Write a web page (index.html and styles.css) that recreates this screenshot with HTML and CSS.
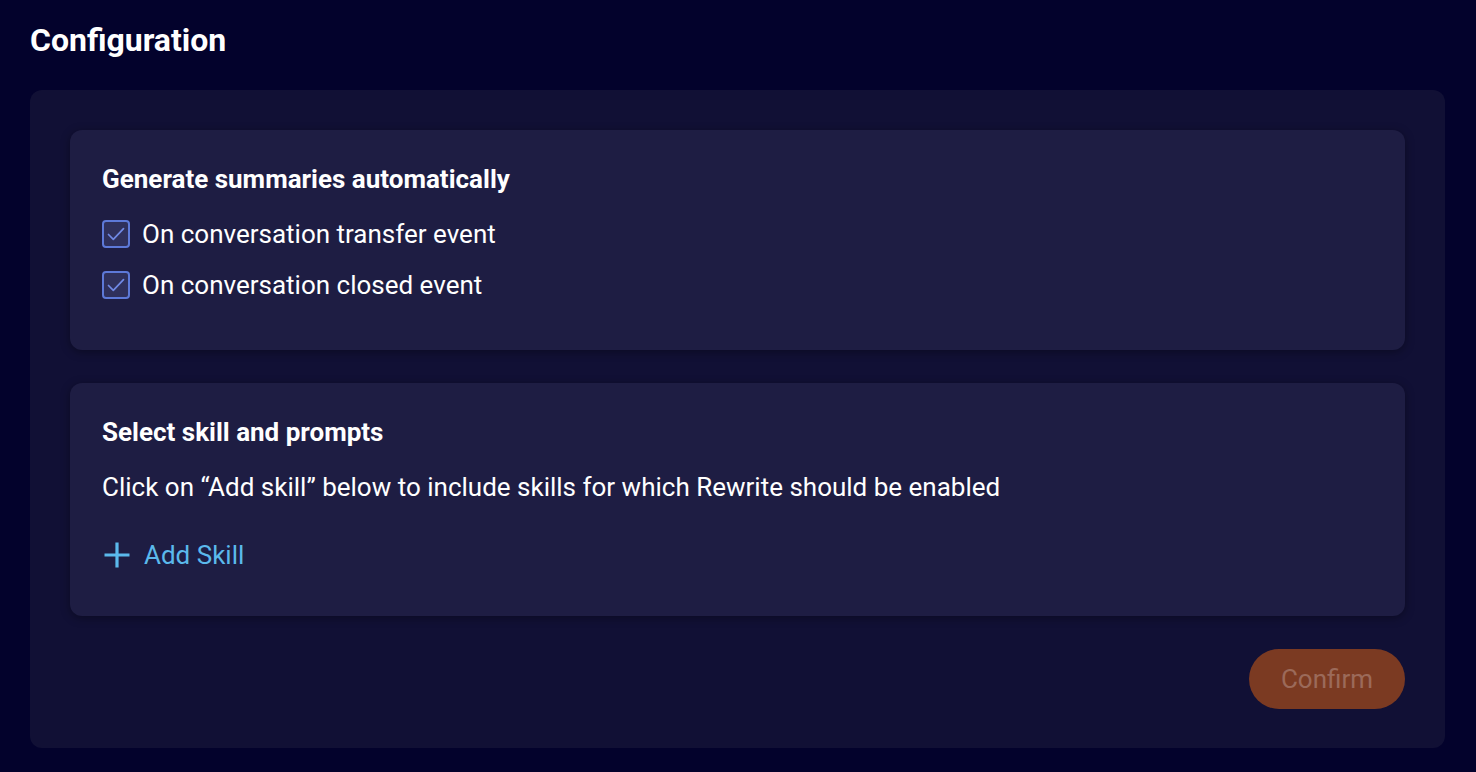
FILE: index.html
```html
<!DOCTYPE html>
<html>
<head>
<meta charset="utf-8">
<link rel="stylesheet" href="styles.css">
</head>
<body>
<div class="page">
  <h1 class="title">Configuration</h1>
  <div class="panel">
    <section class="card card-summaries">
      <h2 class="card-title">Generate summaries automatically</h2>
      <div class="options">
        <label class="option">
          <span class="checkbox">
            <svg viewBox="0 0 20 20" width="20" height="20"><path d="M2.5 10.5l4.8 4.8L17.5 4.6" fill="none" stroke="#7089e4" stroke-width="1.7" stroke-linecap="round" stroke-linejoin="round"/></svg>
          </span>
          <span class="option-text">On conversation transfer event</span>
        </label>
        <label class="option">
          <span class="checkbox">
            <svg viewBox="0 0 20 20" width="20" height="20"><path d="M2.5 10.5l4.8 4.8L17.5 4.6" fill="none" stroke="#7089e4" stroke-width="1.7" stroke-linecap="round" stroke-linejoin="round"/></svg>
          </span>
          <span class="option-text">On conversation closed event</span>
        </label>
      </div>
    </section>
    <section class="card card-skills">
      <h2 class="card-title">Select skill and prompts</h2>
      <p class="card-text">Click on “Add skill” below to include skills for which Rewrite should be enabled</p>
      <button class="add-skill">
        <svg viewBox="0 0 26 26" width="26" height="26"><path d="M13 0.5v25M0.5 13h25" stroke="#5bb9ec" stroke-width="3.2" fill="none"/></svg>
        <span>Add Skill</span>
      </button>
    </section>
    <div class="actions">
      <button class="confirm" disabled>Confirm</button>
    </div>
  </div>
</div>
</body>
</html>
```

FILE: styles.css
```css
* { box-sizing: border-box; }
html, body {
  margin: 0;
  padding: 0;
  background: #03022c;
  font-family: Roboto, "Liberation Sans", sans-serif;
  color: #ffffff;
}
.page {
  padding: 21px 30px 0 30px;
  height: 772px;
}
.title {
  margin: 0;
  font-size: 32px;
  font-weight: 700;
  line-height: 38px;
  height: 69px;
}
.panel {
  width: 1415px;
  height: 658px;
  background: #111035;
  border-radius: 12px;
  padding: 40px;
  display: flex;
  flex-direction: column;
  gap: 33px;
}
.card {
  flex: none;
  background: #1e1d43;
  border-radius: 12px;
  box-shadow: 0 2px 10px rgba(0, 0, 0, 0.35);
  padding: 34px 32px 0 32px;
}
.card-summaries { height: 220px; }
.card-skills { height: 233px; }
.card-title {
  margin: 0;
  font-size: 26px;
  font-weight: 700;
  line-height: 30px;
}
.options {
  margin-top: 25px;
  display: flex;
  flex-direction: column;
  gap: 21px;
}
.option {
  display: flex;
  align-items: center;
  gap: 12px;
  height: 30px;
}
.checkbox {
  width: 28px;
  height: 28px;
  border: 2px solid #5d79d8;
  border-radius: 4px;
  background: #2f305b;
  display: flex;
  align-items: center;
  justify-content: center;
  margin-top: -1px;
}
.option-text {
  font-size: 26px;
  line-height: 30px;
}
.card-text {
  margin: 25px 0 0 0;
  font-size: 26px;
  line-height: 30px;
}
.add-skill {
  margin-top: 38px;
  display: flex;
  align-items: center;
  gap: 14px;
  background: none;
  border: none;
  padding: 0 0 0 2px;
  color: #5bb9ec;
  font-family: inherit;
  font-size: 26px;
  line-height: 30px;
}
.actions {
  flex: none;
  display: flex;
  justify-content: flex-end;
}
.confirm {
  width: 156px;
  height: 60px;
  border-radius: 30px;
  border: none;
  background: #7b3a22;
  color: #9b6a5a;
  font-family: inherit;
  font-size: 26px;
}
```
